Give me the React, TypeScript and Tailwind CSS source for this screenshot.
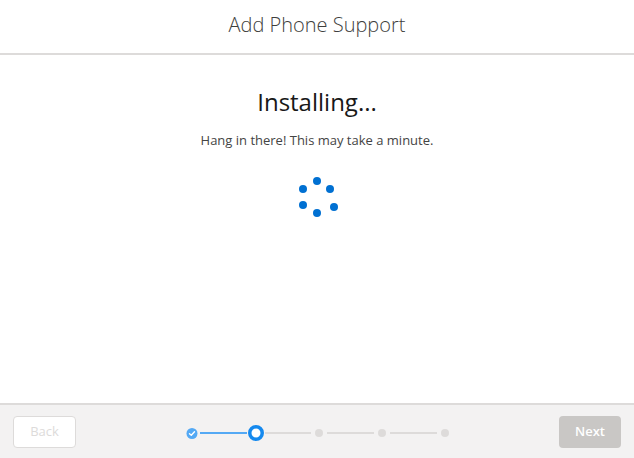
import React from "react";

export default function App() {
  const dots: [number, number][] = [
    [317, 181],
    [303, 189],
    [330, 189],
    [303, 205],
    [334, 207],
    [317, 213],
  ];
  return (
    <div
      className="w-[634px] h-[458px] bg-white flex flex-col overflow-hidden"
      style={{ fontFamily: '"Open Sans", "Noto Sans", sans-serif' }}
    >
      <div className="h-[55px] shrink-0 border-b-2 border-[#dddbda] flex items-center justify-center">
        <span className="text-[20px] font-light text-[#3e3e3c] leading-none mt-[-4px]">
          Add Phone Support
        </span>
      </div>
      <div className="flex-1 flex flex-col items-center">
        <div className="mt-[35px] text-[24px] leading-none text-[#181818]">
          Installing...
        </div>
        <div className="mt-[20px] text-[13px] text-[#444444] leading-none">
          Hang in there! This may take a minute.
        </div>
        <svg width="634" height="50" viewBox="0 175 634 50" className="mt-[28px]">
          {dots.map(([x, y], i) => (
            <circle key={i} cx={x} cy={y} r={4} fill="#0070d2" />
          ))}
        </svg>
      </div>
      <div className="h-[55px] shrink-0 border-t-2 border-[#dddbda] bg-[#f3f2f2] flex items-center px-[13px]">
        <button className="w-[63px] h-[32px] rounded-[4px] border border-[#dddbda] bg-white text-[13px] text-[#dddbda]">
          Back
        </button>
        <svg width="280" height="20" viewBox="180 423 280 20" className="ml-[104px] mt-[3px]">
          <line x1="200" y1="433" x2="247" y2="433" stroke="#54a9f4" strokeWidth="2" />
          <line x1="265" y1="433" x2="311" y2="433" stroke="#dddbda" strokeWidth="2" />
          <line x1="327" y1="433" x2="374" y2="433" stroke="#dddbda" strokeWidth="2" />
          <line x1="390" y1="433" x2="437" y2="433" stroke="#dddbda" strokeWidth="2" />
          <circle cx="192" cy="433.5" r="5.5" fill="#54a9f4" />
          <path d="M189.5 433.7 L191.3 435.3 L194.5 431.8" stroke="white" strokeWidth="1.4" fill="none" strokeLinecap="round" strokeLinejoin="round" />
          <circle cx="256" cy="433" r="6.25" fill="white" stroke="#1589ee" strokeWidth="3.5" />
          <circle cx="319" cy="433" r="4" fill="#dddbda" />
          <circle cx="382" cy="433" r="4" fill="#dddbda" />
          <circle cx="445" cy="433" r="4" fill="#dddbda" />
        </svg>
        <button className="ml-auto w-[62px] h-[32px] rounded-[4px] bg-[#c9c7c5] text-[13px] font-semibold text-white">
          Next
        </button>
      </div>
    </div>
  );
}
